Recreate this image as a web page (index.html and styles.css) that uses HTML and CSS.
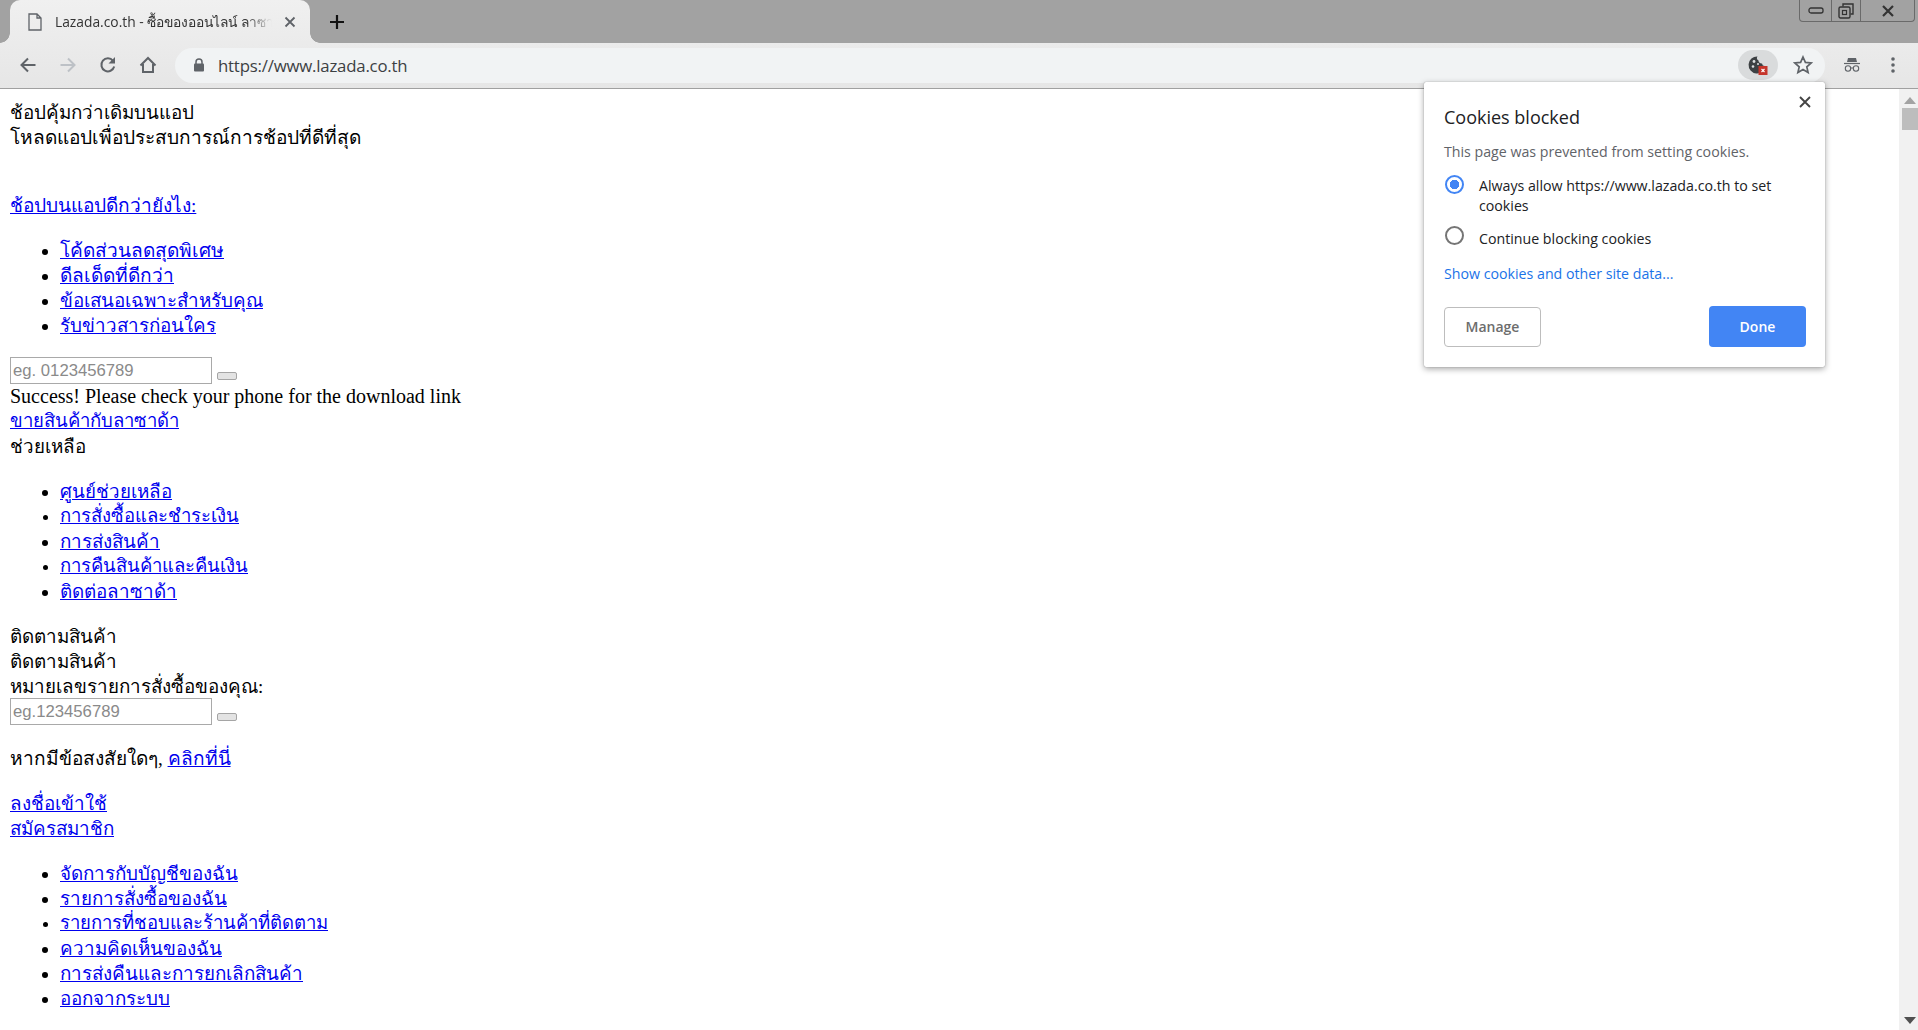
FILE: index.html
```html
<!DOCTYPE html>
<html lang="th">
<head>
<meta charset="utf-8">
<title>Lazada.co.th</title>
<link rel="stylesheet" href="styles.css">
</head>
<body>
<div class="tabstrip">
  <div class="tab">
    <svg class="tab-icon" width="14" height="18" viewBox="0 0 14 18"><path d="M1 1h8l4 4v12H1z M9 1v4h4" fill="none" stroke="#5f6368" stroke-width="1.3"/></svg>
    <span class="tab-title">Lazada.co.th - ซื้อของออนไลน์ ลาซาด้า</span>
    <svg class="tab-close" width="12" height="12" viewBox="0 0 12 12"><path d="M1.5 1.5l9 9M10.5 1.5l-9 9" stroke="#5f6368" stroke-width="1.8"/></svg>
  </div>
  <svg class="newtab" width="16" height="16" viewBox="0 0 16 16"><path d="M8 1v14M1 8h14" stroke="#111" stroke-width="2.2"/></svg>
  <div class="winctl">
    <div class="winbtn w-min"><svg width="16" height="8" viewBox="0 0 16 8"><rect x="1" y="1" width="14" height="5" rx="2" fill="none" stroke="#333" stroke-width="1.3"/></svg></div>
    <div class="winbtn w-max"><svg width="16" height="16" viewBox="0 0 16 16"><path d="M5 3.5V1h10v10h-2.5" fill="none" stroke="#333" stroke-width="1.4"/><rect x="1" y="4" width="11" height="11" rx="1.5" fill="#a2a2a2" stroke="#333" stroke-width="1.4"/><rect x="4.5" y="7.5" width="4" height="4" fill="none" stroke="#333" stroke-width="1.2"/></svg></div>
    <div class="winbtn w-close"><svg width="14" height="12" viewBox="0 0 14 12"><path d="M2 1l10 10M12 1L2 11" stroke="#333" stroke-width="2.2"/></svg></div>
  </div>
</div>
<div class="toolbar">
  <svg class="nav" width="18" height="18" viewBox="0 0 18 18"><path d="M16.5 9H2.5M9 2.5L2.5 9 9 15.5" fill="none" stroke="#5f6368" stroke-width="2"/></svg>
  <svg class="nav" width="18" height="18" viewBox="0 0 18 18"><path d="M1.5 9h14M9 2.5L15.5 9 9 15.5" fill="none" stroke="#bdc1c6" stroke-width="2"/></svg>
  <svg class="nav" width="18" height="18" viewBox="0 0 18 18"><path d="M15.2 10.5A6.5 6.5 0 1 1 14 4.8" fill="none" stroke="#5f6368" stroke-width="2"/><path d="M16 1v6.5h-6.5z" fill="#5f6368"/></svg>
  <svg class="nav" width="18" height="18" viewBox="0 0 18 18"><path d="M1.5 9.5L9 2l7.5 7.5M4 8v8h10V8" fill="none" stroke="#5f6368" stroke-width="2"/></svg>
  <div class="omnibox">
    <svg class="lock" width="12" height="14" viewBox="0 0 12 14"><path d="M3 6V4a3 3 0 0 1 6 0v2" fill="none" stroke="#5f6368" stroke-width="1.5"/><rect x="1" y="5.500" width="10" height="8" rx="1" fill="#5f6368"/></svg>
    <span class="url">https://www.lazada.co.th</span>
    <div class="cookie-pill">
      <svg width="22" height="22" viewBox="0 0 22 22"><path d="M10.500 2.500a8.500 8.500 0 1 0 8 9.500 3 3 0 0 1-3.500-2.500 3 3 0 0 1-3.500-3 2.500 2.500 0 0 1-1-4z" fill="#3c4043"/><circle cx="7" cy="7.500" r="1.400" fill="#dcdedf"/><circle cx="6" cy="12.500" r="1.300" fill="#dcdedf"/><circle cx="11" cy="10" r="1" fill="#dcdedf"/><rect x="11.500" y="12" width="9" height="9" fill="#c5352b"/><path d="M14.500 15l3 3M17.500 15l-3 3" stroke="#fff" stroke-width="1.100"/></svg>
    </div>
    <svg class="star" width="20" height="20" viewBox="0 0 20 20"><path d="M10 2l2.400 5.400 5.800.6-4.400 3.900 1.300 5.700L10 14.600l-5.100 3 1.300-5.700L1.800 8l5.800-.6z" fill="none" stroke="#5f6368" stroke-width="1.700"/></svg>
  </div>
  <svg class="incog" width="18" height="16" viewBox="0 0 18 16"><path d="M5 1h8l1 4H4z" fill="#5f6368"/><path d="M1 6.500h16" stroke="#5f6368" stroke-width="1.200"/><circle cx="5" cy="11.500" r="2.700" fill="none" stroke="#5f6368" stroke-width="1.100"/><circle cx="13" cy="11.500" r="2.700" fill="none" stroke="#5f6368" stroke-width="1.100"/><path d="M7.700 11h2.600" stroke="#5f6368"/></svg>
  <svg class="menu" width="4" height="16" viewBox="0 0 4 16"><circle cx="2" cy="2" r="1.800" fill="#5f6368"/><circle cx="2" cy="8" r="1.800" fill="#5f6368"/><circle cx="2" cy="14" r="1.800" fill="#5f6368"/></svg>
</div>
<div class="viewport">
  <main class="page">
    <div>ช้อปคุ้มกว่าเดิมบนแอป</div>
    <div class="wide">โหลดแอปเพื่อประสบการณ์การช้อปที่ดีที่สุด</div>
    <p class="gap-lg wide"><a href="#">ช้อปบนแอปดีกว่ายังไง:</a></p>
    <ul>
      <li class="wide"><a href="#">โค้ดส่วนลดสุดพิเศษ</a></li>
      <li class="wide"><a href="#">ดีลเด็ดที่ดีกว่า</a></li>
      <li><a href="#">ข้อเสนอเฉพาะสำหรับคุณ</a></li>
      <li><a href="#">รับข่าวสารก่อนใคร </a></li>
    </ul>
    <div class="formrow"><input class="field" placeholder="eg. 0123456789"><button class="go" aria-label="ส่ง"></button></div>
    <div class="latin">Success! Please check your phone for the download link</div>
    <div class="narrow"><a href="#">ขายสินค้ากับลาซาด้า</a></div>
    <div>ช่วยเหลือ</div>
    <ul>
      <li><a href="#">ศูนย์ช่วยเหลือ</a></li>
      <li class="narrow"><a href="#">การสั่งซื้อและชำระเงิน</a></li>
      <li><a href="#">การส่งสินค้า</a></li>
      <li class="narrow"><a href="#">การคืนสินค้าและคืนเงิน</a></li>
      <li><a href="#">ติดต่อลาซาด้า</a></li>
    </ul>
    <div>ติดตามสินค้า</div>
    <div>ติดตามสินค้า</div>
    <div>หมายเลขรายการสั่งซื้อของคุณ:</div>
    <div class="formrow"><input class="field" placeholder="eg.123456789"><button class="go" aria-label="ค้นหา"></button></div>
    <p class="wide after-form">หากมีข้อสงสัยใดๆ, <a href="#">คลิกที่นี่</a></p>
    <div><a href="#">ลงชื่อเข้าใช้</a></div>
    <div><a href="#">สมัครสมาชิก</a></div>
    <ul>
      <li><a href="#">จัดการกับบัญชีของฉัน</a></li>
      <li><a href="#">รายการสั่งซื้อของฉัน</a></li>
      <li class="narrow"><a href="#">รายการที่ชอบและร้านค้าที่ติดตาม</a></li>
      <li><a href="#">ความคิดเห็นของฉัน</a></li>
      <li><a href="#">การส่งคืนและการยกเลิกสินค้า</a></li>
      <li><a href="#">ออกจากระบบ</a></li>
    </ul>
  </main>
  <div class="scrollbar">
    <svg width="12" height="7" viewBox="0 0 12 7"><path d="M6 0l6 7H0z" fill="#a3a3a3"/></svg>
    <div class="thumb"></div>
    <svg class="arrow-down" width="12" height="7" viewBox="0 0 12 7"><path d="M0 0h12L6 7z" fill="#505050"/></svg>
  </div>
</div>
<section class="bubble">
  <svg class="bubble-close" width="12" height="12" viewBox="0 0 12 12"><path d="M1 1l10 10M11 1L1 11" stroke="#444" stroke-width="1.900"/></svg>
  <h1>Cookies blocked</h1>
  <p class="desc">This page was prevented from setting cookies.</p>
  <div class="option">
    <span class="radio on"></span>
    <span>Always allow https://www.lazada.co.th to set cookies</span>
  </div>
  <div class="option second">
    <span class="radio"></span>
    <span>Continue blocking cookies</span>
  </div>
  <a class="more" href="#">Show cookies and other site data...</a>
  <div class="actions">
    <button class="btn manage">Manage</button>
    <button class="btn done">Done</button>
  </div>
</section>
</body>
</html>
```
FILE: styles.css
```css
* { box-sizing: border-box; }
html, body { margin: 0; height: 100%; overflow: hidden; }
body { width: 1918px; height: 1030px; position: relative; background: #fff; display: flex; flex-direction: column; }

.tabstrip { height: 43px; background: #a2a2a2; display: flex; align-items: flex-end; padding-left: 10px; flex: none; }
.tab { position: relative; width: 300px; height: 43px; background: linear-gradient(#f0f0f0, #ebebeb); border-radius: 10px 10px 0 0; display: flex; align-items: center; padding: 0 14px 0 18px; font: 14px "Open Sans", "Noto Sans", sans-serif; color: #333; }
.tab::before, .tab::after { content: ""; position: absolute; bottom: 0; width: 10px; height: 10px; background: radial-gradient(circle at 0 0, transparent 9.500px, #ebebeb 10px); }
.tab::before { left: -10px; }
.tab::after { right: -10px; transform: scaleX(-1); }
.tab-icon { flex: none; margin-right: 13px; }
.tab-title { flex: 1; white-space: nowrap; overflow: hidden; font-size: 13.800px; -webkit-mask-image: linear-gradient(90deg, #000 88%, transparent); mask-image: linear-gradient(90deg, #000 88%, transparent); }
.tab-close { flex: none; margin-left: 12px; }
.newtab { margin: 0 0 13px 19px; flex: none; }
.winctl { margin-left: auto; margin-right: 3px; align-self: flex-start; height: 22px; width: 116px; border: 1.500px solid #6a6a6a; border-top: 0; border-radius: 0 0 4px 4px; display: flex; }
.winbtn { display: flex; align-items: center; justify-content: center; border-right: 1.500px solid #6a6a6a; }
.w-min { width: 32px; }
.w-max { width: 29px; }
.w-close { flex: 1; border-right: 0; }

.toolbar { height: 46px; flex: none; background: linear-gradient(#ebebeb, #e6e6e6); border-bottom: 1px solid #a0a0a0; display: flex; align-items: center; padding: 0 0 1px 19px; }
.nav { margin-right: 22px; flex: none; }
.omnibox { width: 1650px; margin-left: -4px; height: 35px; border-radius: 18px; background: #f1f3f4; display: flex; align-items: center; padding: 0 12px 0 18px; flex: none; }
.lock { flex: none; margin-right: 13px; }
.url { font: 16.800px "Open Sans", "Noto Sans", sans-serif; color: #3c4043; letter-spacing: -0.200px; }
.cookie-pill { margin-left: auto; width: 40px; height: 30px; border-radius: 15px; background: #d9dbdc; display: flex; align-items: center; justify-content: center; }
.star { margin-left: 15px; flex: none; }
.incog { margin-left: 18px; flex: none; }
.menu { margin-left: 30px; flex: none; }

.viewport { flex: 1; min-height: 0; display: flex; overflow: hidden; }
.page { flex: 1; min-width: 0; padding: 11px 10px 0; font: 18.800px/25px "Liberation Serif", "Noto Sans", serif; color: #000; overflow: hidden; }
.page a { color: #0000ee; }
.page p { margin: 20px 0; }
.page p.gap-lg { margin-top: 43px; }
.page p.after-form { margin-top: 21px; }
.page ul { margin: 20px 0; padding-left: 50px; }
.wide { font-size: 19.100px; }
.narrow { font-size: 18.500px; }
.latin { font-size: 20px; }
.formrow { display: flex; align-items: flex-end; height: 27px; margin-top: -1px; }
.field { width: 202px; height: 27px; padding: 0 2px; border: 1px solid #a9a9a9; font: 16.700px "Liberation Sans", sans-serif; background: #fff; }
.field::placeholder { color: #8a8a8a; opacity: 1; }
.go { width: 20px; height: 8px; margin: 0 0 4px 5px; padding: 0; border: 1px solid #a5a5a5; border-radius: 2px; background: #e3e3e3; }

.scrollbar { width: 19px; flex: none; background: #f1f1f1; display: flex; flex-direction: column; align-items: center; padding: 8px 0 6px 3px; }
.thumb { width: 100%; height: 22px; margin: 4px 0 0; background: #bdbdbd; align-self: stretch; }
.arrow-down { margin-top: auto; }

.bubble { position: absolute; left: 1424px; top: 82px; width: 401px; height: 285px; padding: 23px 19px 0 20px; background: #fff; border-radius: 2px; box-shadow: 0 0 1px rgba(0,0,0,.45), 0 2px 6px rgba(0,0,0,.35); font: 14.200px/20px "Open Sans", "Noto Sans", sans-serif; color: #202124; }
.bubble-close { position: absolute; top: 14px; right: 14px; }
.bubble h1 { margin: 0; font-size: 18px; font-weight: 400; line-height: 24px; }
.desc { margin: 13px 0 0; color: #5f6368; }
.option { display: flex; margin-top: 14px; }
.option.second { margin-top: 13px; }
.radio { flex: none; width: 19px; height: 19px; margin-right: 15px; margin-left: 1px; border-radius: 50%; border: 2px solid #757575; background: #fff; margin-top: -1px; }
.radio.on { border-color: #4285f4; background: radial-gradient(circle, #4285f4 4.500px, #fff 5px); }
.option.second .radio { margin-top: -3px; }
.more { display: block; margin-top: 15px; color: #1a73e8; text-decoration: none; }
.actions { display: flex; justify-content: space-between; align-items: center; margin-top: 22px; }
.btn { height: 41px; width: 97px; border-radius: 4px; font: 600 14px "Open Sans", "Noto Sans", sans-serif; }
.manage { height: 40px; background: #fff; border: 1px solid #bdbdbd; color: #6d6d6d; }
.done { background: #4285f4; border: 0; color: #fff; }
```
